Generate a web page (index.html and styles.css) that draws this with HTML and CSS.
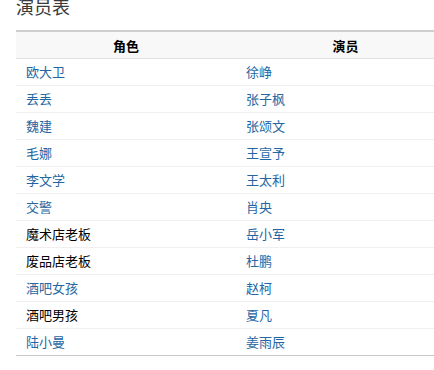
FILE: index.html
```html
<!DOCTYPE html>
<html lang="zh-CN">
<head>
<meta charset="utf-8">
<title>演员表</title>
<link rel="stylesheet" href="styles.css">
</head>
<body>
<h2 class="title">演员表</h2>
<table class="cast">
  <thead>
    <tr><th>角色</th><th>演员</th></tr>
  </thead>
  <tbody>
    <tr><td><a href="#">欧大卫</a></td><td><a href="#">徐峥</a></td></tr>
    <tr><td><a href="#">丢丢</a></td><td><a href="#">张子枫</a></td></tr>
    <tr><td><a href="#">魏建</a></td><td><a href="#">张颂文</a></td></tr>
    <tr><td><a href="#">毛娜</a></td><td><a href="#">王宣予</a></td></tr>
    <tr><td><a href="#">李文学</a></td><td><a href="#">王太利</a></td></tr>
    <tr><td><a href="#">交警</a></td><td><a href="#">肖央</a></td></tr>
    <tr><td>魔术店老板</td><td><a href="#">岳小军</a></td></tr>
    <tr><td>废品店老板</td><td><a href="#">杜鹏</a></td></tr>
    <tr><td><a href="#">酒吧女孩</a></td><td><a href="#">赵柯</a></td></tr>
    <tr><td>酒吧男孩</td><td><a href="#">夏凡</a></td></tr>
    <tr><td><a href="#">陆小曼</a></td><td><a href="#">姜雨辰</a></td></tr>
  </tbody>
</table>
</body>
</html>
```
FILE: styles.css
```css
html, body {
  margin: 0;
  overflow: hidden;
  background: #fff;
}

body {
  padding-left: 16px;
  font-family: "Noto Sans CJK SC", "Microsoft YaHei", sans-serif;
  font-size: 13px;
  color: #000;
}

.title {
  margin: -5px 0 0 0;
  height: 35px;
  font-size: 18px;
  line-height: 22px;
  font-weight: normal;
  color: #3a3a3a;
}

.cast {
  width: 439px;
  border-collapse: collapse;
  table-layout: fixed;
  border-top: 2px solid #cfcfcf;
  border-bottom: 1px solid #c8c8c8;
}

.cast th {
  height: 26px;
  padding: 0;
  background: #f8f8f8;
  font-weight: bold;
  text-align: center;
  border-bottom: 1px solid #e2e2e2;
}

.cast th:first-child,
.cast td:first-child {
  width: 220px;
}

.cast td {
  height: 26px;
  padding: 0 0 0 10px;
  border-bottom: 1px solid #efefef;
  line-height: 26px;
}

.cast tbody tr:last-child td {
  border-bottom: none;
}

.cast a {
  color: #2466a2;
  text-decoration: none;
}
```
